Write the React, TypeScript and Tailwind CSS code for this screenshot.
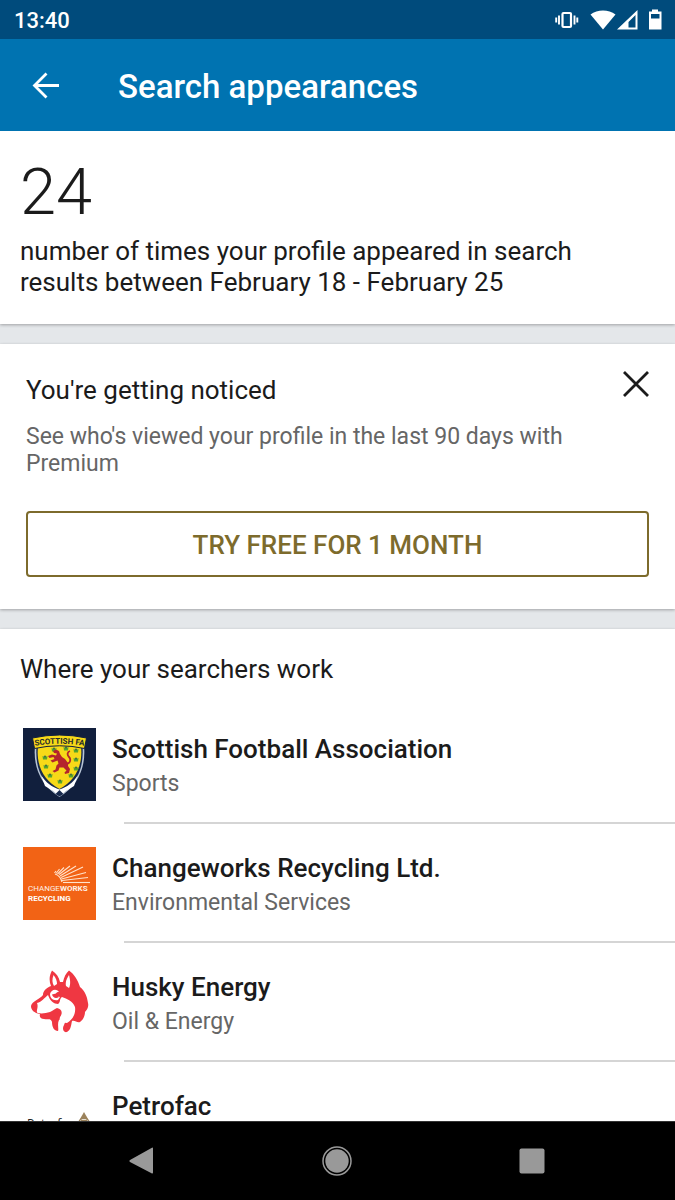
import type { ReactNode } from "react";

interface Company {
  name: string;
  industry: string;
  logo: ReactNode;
}

function ScottishFaLogo() {
  const thistles = [
    [31, 21], [43, 20], [53, 22], [22, 29], [53, 31], [23, 38], [53, 40], [27, 47], [48, 47], [37, 53],
  ];

  return (
    <svg viewBox="0 0 73 73" className="h-full w-full" aria-hidden="true">
      <defs>
        <path id="crest-arc" d="M10 18Q36.500 13.500 63 18" />
      </defs>
      <rect width="73" height="73" fill="#111f3d" />
      {/* Shield */}
      <path d="M12 18C10 38 17 57 36.500 69 56 57 63 38 61 18 45 13 28 13 12 18Z" fill="#b9c6d6" />
      <path d="M13.500 19C12 38 18 56 36.500 67.500 55 56 61 38 59.500 19 44 15 29 15 13.500 19Z" fill="#17294d" />
      <path d="M15 18C13 37 20 52 36.500 61 53 52 60 37 58 18 44 15 29 15 15 18Z" fill="#f7d918" />
      {/* Saltire ribbon */}
      <path d="M18 47C23 55 29 59 36.500 61.500 44 59 50 55 55 47L51 58 43 63 36.500 68.500 30 63 22 58Z" fill="#fff" />
      <path d="M32.500 66l4-4 4 4-4 2.500Z" fill="#17294d" />
      {/* Thistles */}
      {thistles.map(([x, y]) => (
        <g key={`${x}-${y}`}>
          <path d={`M${x - 2.5} ${y - 1}l2.500 1 2.500-1-.5 3.500h-4Z`} fill="#58a52c" />
          <circle cx={x} cy={y - 0.5} r="1" fill="#38664a" />
        </g>
      ))}
      {/* Lion rampant */}
      <path d="M30 23l3-1.500 3 1.500 1 3 2 3 3 2 3 4 0 3 2 3-1 4-4 1-.5-1.500 2-2-3-3-4 0-1 3-4 2-2-1.500 3-1.500 1-4 2-2-1-3-5 2-2-2 4-1.500-1-2-4 1-1.500-2 4-1.500 4 1 1-2-3-.5Z" fill="#b4252d" />
      <path d="M42 36c6 0 6-5 4-7s-2-5 1-6" fill="none" stroke="#b4252d" strokeWidth="1.800" />
      {/* Banner */}
      <path d="M9.500 10Q36.500 4 63.500 10L61.500 20.500Q36.500 15 11.500 20.500Z" fill="#f7d918" stroke="#111f3d" />
      <text fontFamily="Roboto, sans-serif" fontSize="8" fontWeight="700" fill="#252b2c">
        <textPath href="#crest-arc" startOffset="50%" textAnchor="middle">SCOTTISH FA</textPath>
      </text>
    </svg>
  );
}

function ChangeworksLogo() {
  return (
    <svg viewBox="0 0 73 73" className="h-full w-full" aria-hidden="true">
      <rect width="73" height="73" fill="#f26315" />
      <g fill="none" stroke="#ffe3cc" strokeWidth="1.100">
        <path d="M40 35.500H67" />
        <path d="M39 33.500L65 30.500" />
        <path d="M38.500 32L63 25.500" />
        <path d="M38 30.500L60 20" />
        <path d="M37 29L53 19" />
        <path d="M36 27.500L47 19" />
        <path d="M34.500 27L41 20.500" />
        <path d="M33 26.500L36.500 22" />
        <path d="M31.500 26L33 24" />
        <path d="M39 35c-1-4-4-7-7-8" />
      </g>
      <text x="5" y="44" fontFamily="Roboto, sans-serif" fontSize="8" fill="#fff0e5">
        CHANGE<tspan fontWeight="700">WORKS</tspan>
      </text>
      <text x="5" y="54" fontFamily="Roboto, sans-serif" fontSize="8" fontWeight="700" fill="#fff">
        RECYCLING
      </text>
    </svg>
  );
}

function HuskyLogo() {
  return (
    <svg viewBox="0 0 73 73" className="h-full w-full" aria-hidden="true">
      <path
        d="M29 4.500C33 7 36 11 37 16L40 16C41 11 43 7 46 4.500C51 8 55 14 57 21C62 25 64 30 65 37C66 41 64 44 62 46C62 50 60 54 57 56C54 57 52 54 49 55C48 59 48 64 44 66C40 67 39 62 41 59L43 54L36 54C34 58 36 63 35 65C31 65 29 61 29 56C28 52 24 54 21 53C18 53 16 51 17 48C11 47 8 44 8 40C9 35 17 33 20 29C20 25 23 22 28 20C26 15 26 10 29 4.500Z"
        fill="#ef3742"
      />
      {/* Muzzle and cheek */}
      <path
        d="M14 37C19 36 21 32 25 29C27 35 31 38 35 38C38 36 36 33 39 31C44 33 50 35 52 41C53 48 50 53 44 57L36 56L37 51C40 47 39 43 34 42C31 43 30 45 27 46C23 47 19 48 15 47C12 46 16 42 14 37Z"
        fill="#fff"
      />
      <path d="M18 49C24 49 29 48 34 45C36 49 33 53 27 52.500C22 52 20 52 18 49Z" fill="#ef3742" />
      {/* Ears */}
      <path d="M30.500 9C33 12 34 15 34 18L31 20C29 17 29 13 30.500 9Z" fill="#fff" />
      <path d="M46 9C44 12 42 16 43 20L46 22C48 18 47 13 46 9Z" fill="#fff" />
      {/* Eye */}
      <path d="M27 28C28 24 33 22 36 26C33 26 32 28 34 30L37 31L35 34C30 35 27 32 27 28Z" fill="#fff" />
      <path d="M29 28.500L33 27.500L36 31C33 33 30 32 29 28.500Z" fill="#ef3742" />
    </svg>
  );
}

function PetrofacLogo() {
  return (
    <svg viewBox="0 0 73 73" className="h-full w-full" aria-hidden="true">
      <text x="4" y="43" fontFamily="Open Sans, sans-serif" fontSize="12" fill="#242424">
        Petrofac
      </text>
      <path d="M61 27L65 34H57Z" fill="#9b825b" />
      <circle cx="61" cy="38" r="5" fill="none" stroke="#9b825b" strokeWidth="1.500" />
      <path d="M58 35.500h6" stroke="#9b825b" strokeWidth="1.500" />
    </svg>
  );
}

const companies: Company[] = [
  { name: "Scottish Football Association", industry: "Sports", logo: <ScottishFaLogo /> },
  { name: "Changeworks Recycling Ltd.", industry: "Environmental Services", logo: <ChangeworksLogo /> },
  { name: "Husky Energy", industry: "Oil & Energy", logo: <HuskyLogo /> },
  { name: "Petrofac", industry: "Oil & Energy", logo: <PetrofacLogo /> },
];

function StatusBar() {
  return (
    <div className="flex h-[39px] shrink-0 items-center justify-between bg-[#004b7c] pt-0.5 pr-3 pl-3.5 text-white">
      <span className="text-[22px] leading-6 font-medium">13:40</span>
      <svg width="108" height="24" viewBox="0 0 108 24" fill="#fff" aria-hidden="true">
        {/* Vibrate */}
        <rect x="7.500" y="4" width="8.500" height="14" rx="1" fill="none" stroke="#fff" strokeWidth="2.200" />
        <path d="M4 6.500v9M1.200 8.500v5M19.500 6.500v9M22.300 8.500v5" stroke="#fff" strokeWidth="1.900" />
        {/* Wifi */}
        <path d="M48 20.500L35.500 5.500C42.500 0 53.500 0 60.500 5.500Z" />
        {/* Cell signal */}
        <path fillRule="evenodd" d="M82.500 1V20.500H62ZM80.500 6L73.500 13V18.500H80.500Z" />
        {/* Battery */}
        <path fillRule="evenodd" d="M97 .5h6V2.500h3.500V20.500H94V2.500h3ZM96 5v4.500h8.500V5Z" />
      </svg>
    </div>
  );
}

function NavigationBar() {
  return (
    <nav className="flex h-[79px] shrink-0 items-center justify-around border-t border-[#333] bg-black px-[46px] text-[#999]">
      <button type="button" aria-label="Back">
        <svg width="30" height="30" viewBox="0 0 30 30" fill="currentColor">
          <path d="M25 2.500V26.500Q25 28 23.500 27.300L2 16Q.5 15 2 14L23.500 2Q25 1 25 2.500Z" />
        </svg>
      </button>
      <button type="button" aria-label="Home">
        <svg width="30" height="30" viewBox="0 0 30 30" fill="currentColor">
          <circle cx="15" cy="15" r="14" fill="none" stroke="currentColor" strokeWidth="1.500" />
          <circle cx="15" cy="15" r="11.700" />
        </svg>
      </button>
      <button type="button" aria-label="Recent apps">
        <svg width="30" height="30" viewBox="0 0 30 30" fill="currentColor">
          <rect x="2.500" y="2.500" width="25" height="25" rx="2" />
        </svg>
      </button>
    </nav>
  );
}

export default function App() {
  return (
    <div className="flex h-screen flex-col overflow-hidden bg-[#e4e7ea] font-[Roboto,sans-serif] text-[#1b1b1b]">
      <StatusBar />

      <header className="flex h-[92px] shrink-0 items-center gap-[58px] bg-[#0073b1] pt-0.5 pl-8 text-white">
        <button type="button" aria-label="Back">
          <svg width="28" height="28" viewBox="0 0 28 28" fill="none" stroke="currentColor" strokeWidth="2.800">
            <path d="M27 13.500H3M14.500 1.500L2.500 13.500L14.500 25.500" />
          </svg>
        </button>
        <h1 className="pt-0.5 text-[33px] leading-10 font-medium">Search appearances</h1>
      </header>

      <main className="flex min-h-0 flex-1 flex-col gap-5 overflow-hidden">
        <section className="shrink-0 bg-white px-5 pt-[29px] pb-[26px] shadow-[0_1px_3px_rgba(0,0,0,0.3)]">
          <p className="text-[65px] leading-[64px] font-light">24</p>
          <p className="mt-3 max-w-[600px] text-[26px] leading-[31px]">
            number of times your profile appeared in search results between February 18 - February 25
          </p>
        </section>

        <section className="shrink-0 bg-white px-[26px] pt-[27px] pb-8 shadow-[0_1px_3px_rgba(0,0,0,0.3)]">
          <div className="flex items-start justify-between">
            <h2 className="pt-[3px] text-[26px] leading-8">You&apos;re getting noticed</h2>
            <button type="button" aria-label="Dismiss">
              <svg width="26" height="26" viewBox="0 0 26 26" fill="none" stroke="currentColor" strokeWidth="2.800">
                <path d="M1 1L25 25M25 1L1 25" />
              </svg>
            </button>
          </div>
          <p className="mt-[17px] max-w-[580px] text-[23px] leading-[27px] text-[#666]">
            See who&apos;s viewed your profile in the last 90 days with Premium
          </p>
          <button
            type="button"
            className="mt-[34px] h-[66px] w-full rounded border-2 border-[#7d6b2c] pt-0.5 text-[26px] leading-8 font-medium text-[#7d6b2c]"
          >
            TRY FREE FOR 1 MONTH
          </button>
        </section>

        <section className="shrink-0 bg-white pt-6 shadow-[0_1px_3px_rgba(0,0,0,0.3)]">
          <h2 className="mb-5 px-5 text-[26px] leading-8">Where your searchers work</h2>
          <ul>
            {companies.map((company) => (
              <li key={company.name}>
                <div className="flex gap-4 pt-[23px] pb-[21px] pl-[23px]">
                  <div className="h-[73px] w-[73px] shrink-0">{company.logo}</div>
                  <div className="pt-[5px]">
                    <h3 className="text-[26px] leading-8 font-medium">{company.name}</h3>
                    <p className="mt-[5px] text-[23px] leading-[27px] text-[#666]">{company.industry}</p>
                  </div>
                </div>
                <div className="ml-[124px] h-0.5 bg-[#d5d5d5]" />
              </li>
            ))}
          </ul>
        </section>
      </main>

      <NavigationBar />
    </div>
  );
}
